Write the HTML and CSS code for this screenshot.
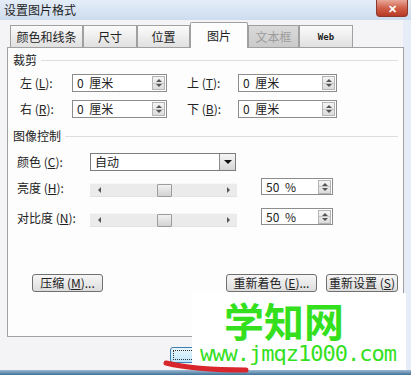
FILE: index.html
```
<!DOCTYPE html>
<html lang="zh-CN">
<head>
    <meta charset="UTF-8">
    <title>设置图片格式</title>
    <link rel="stylesheet" href="styles.css">
</head>
<body>
    <div class="dialog">
        <div class="titlebar">
            <span class="title">设置图片格式</span>
            <span class="close">✕</span>
        </div>

        <div class="tabs">
            <div class="tab tab-line">颜色和线条</div>
            <div class="tab tab-size">尺寸</div>
            <div class="tab tab-pos">位置</div>
            <div class="tab tab-pic active">图片</div>
            <div class="tab tab-box disabled">文本框</div>
            <div class="tab tab-web">Web</div>
        </div>

        <div class="panel">
            <div class="group-title">裁剪</div>
            <div class="crop">
                <span class="label">左 (<u>L</u>):</span>
                <div class="field"><span class="val">0 厘米</span><span class="spin"></span></div>
                <span class="label right">上 (<u>T</u>):</span>
                <div class="field"><span class="val">0 厘米</span><span class="spin"></span></div>

                <span class="label">右 (<u>R</u>):</span>
                <div class="field"><span class="val">0 厘米</span><span class="spin"></span></div>
                <span class="label right">下 (<u>B</u>):</span>
                <div class="field"><span class="val">0 厘米</span><span class="spin"></span></div>
            </div>

            <div class="group-title second">图像控制</div>
            <div class="control color-row">
                <span class="label">颜色 (<u>C</u>):</span>
                <div class="select"><span>自动</span><span class="drop"></span></div>
            </div>
            <div class="control slider-row">
                <span class="label">亮度 (<u>H</u>):</span>
                <div class="slider"><span class="arrow-l"></span><span class="thumb"></span><span class="arrow-r"></span></div>
                <div class="field pct"><span class="val">50 %</span><span class="spin"></span></div>
            </div>
            <div class="control slider-row last">
                <span class="label">对比度 (<u>N</u>):</span>
                <div class="slider"><span class="arrow-l"></span><span class="thumb"></span><span class="arrow-r"></span></div>
                <div class="field pct"><span class="val">50 %</span><span class="spin"></span></div>
            </div>

            <div class="buttons">
                <button class="btn btn-compress">压缩 (<u>M</u>)...</button>
                <button class="btn btn-recolor">重新着色 (<u>E</u>)...</button>
                <button class="btn btn-reset">重新设置 (<u>S</u>)</button>
            </div>
        </div>

        <div class="footer">
            <button class="ok"><span></span></button>
        </div>
        <div class="frame-bottom"></div>

        <!-- watermark pasted over the screenshot -->
        <div class="watermark">
            <div class="wm-name">学知网</div>
            <div class="wm-url">www.jmqz1000.com</div>
        </div>
        <svg class="scribble" width="90" height="16" viewBox="0 0 90 16">
            <path d="M4 4 C 20 8, 40 11, 84 11" stroke="#d8262c" stroke-width="5" fill="none" stroke-linecap="round"/>
        </svg>
    </div>
</body>
</html>
```

FILE: styles.css
```
* {
    box-sizing: border-box;
}
body {
    margin: 0;
    font: 12px/1 "Noto Sans CJK SC", sans-serif;
    color: #222;
}
u {
    text-decoration: underline;
}
.dialog {
    position: relative;
    width: 411px;
    height: 375px;
    overflow: hidden;
    background: linear-gradient(to right, #f4f3f6 403px, #e7edf6 403px);
}
.titlebar {
    height: 20px;
    display: flex;
    align-items: center;
    padding-left: 4px;
    background: linear-gradient(#e4edf8, #cddcee);
}
.title {
    color: #1e1e1e;
}
.close {
    margin-left: auto;
    margin-right: 3px;
    align-self: flex-start;
    width: 32px;
    height: 17px;
    border: 1px solid #8c3a2e;
    border-top: none;
    border-radius: 0 0 4px 4px;
    background: linear-gradient(#e8a898, #d0604a 50%, #b83a26);
    display: flex;
    align-items: center;
    justify-content: center;
    color: #fff;
    font-weight: bold;
    font-size: 11px;
}

/* tabs */
.tabs {
    display: flex;
    align-items: flex-end;
    height: 27px;
    padding-left: 10px;
}
.tab {
    height: 22px;
    border: 1px solid #a0a0a0;
    border-bottom: none;
    background: linear-gradient(#fbfbfb, #e0e0e0);
    display: flex;
    align-items: center;
    justify-content: center;
}
.tab.active {
    height: 26px;
    margin-bottom: -1px;
    position: relative;
    z-index: 1;
    background: #fdfdfd;
    border-radius: 2px 2px 0 0;
}
.tab.disabled {
    background: linear-gradient(#dadada, #cacaca);
    color: #9c9c9c;
}
.tab-line { width: 73px; }
.tab-size { width: 54px; }
.tab-pos { width: 53px; }
.tab-pic { width: 58px; }
.tab-box { width: 51px; }
.tab-web {
    width: 54px;
    font: bold 9px "DejaVu Sans Mono", monospace;
}

/* panel */
.panel {
    margin-left: 7px;
    width: 397px;
    height: 290px;
    border: 1px solid #a0a0a0;
    background: #fdfdfd;
    padding: 5px 5px 0 5px;
    display: flex;
    flex-direction: column;
}
.group-title {
    display: flex;
    align-items: center;
    gap: 4px;
    height: 14px;
}
.group-title::after {
    content: "";
    flex: 1;
    border-top: 1px solid #dedede;
}
.group-title.second {
    margin-top: 11px;
}
.crop {
    margin-top: 7px;
    padding-left: 7px;
    display: grid;
    grid-template-columns: 52px 95px 71px 99px;
    grid-auto-rows: 18px;
    row-gap: 8px;
    align-items: center;
}
.label {
    white-space: nowrap;
}
.label.right {
    padding-left: 20px;
}
.field {
    height: 18px;
    border: 1px solid #8c8c8c;
    background: #fff;
    display: flex;
    align-items: center;
    padding-left: 4px;
    word-spacing: 3px;
}
.field .val {
    flex: 1;
}
.spin {
    width: 13px;
    height: 14px;
    margin-right: 1px;
    border: 1px solid #b4b4b4;
    background:
        linear-gradient(#c4c4c4, #c4c4c4) center / 100% 1px no-repeat,
        linear-gradient(#f4f4f4, #dcdcdc);
    position: relative;
}
.spin::before,
.spin::after {
    content: "";
    position: absolute;
    left: 3px;
    border-left: 3px solid transparent;
    border-right: 3px solid transparent;
}
.spin::before {
    top: 2px;
    border-bottom: 3px solid #555;
}
.spin::after {
    bottom: 2px;
    border-top: 3px solid #555;
}

/* image control */
.control {
    display: flex;
    align-items: center;
    padding-left: 4px;
}
.control .label {
    width: 73px;
}
.color-row {
    margin-top: 10px;
    height: 18px;
}
.select {
    width: 146px;
    height: 18px;
    border: 1px solid #7c7c7c;
    background: #fff;
    display: flex;
    align-items: center;
    padding-left: 4px;
}
.drop {
    margin-left: auto;
    width: 16px;
    height: 16px;
    border-left: 1px solid #8a8a8a;
    background: linear-gradient(#f6f6f6, #d6d6d6);
    display: flex;
    align-items: center;
    justify-content: center;
}
.drop::after {
    content: "";
    border-left: 4px solid transparent;
    border-right: 4px solid transparent;
    border-top: 4px solid #111;
}
.slider-row {
    margin-top: 7px;
    height: 19px;
}
.slider-row.last {
    margin-top: 11px;
}
.slider {
    width: 147px;
    height: 14px;
    align-self: flex-end;
    background: #ebebeb;
    border-top: 1px solid #f7f7f7;
    border-bottom: 1px solid #e2e2e2;
    display: flex;
    align-items: center;
}
.arrow-l {
    margin-left: 8px;
    border-right: 3px solid #555;
    border-top: 3px solid transparent;
    border-bottom: 3px solid transparent;
}
.thumb {
    margin-left: 56px;
    width: 15px;
    height: 13px;
    border: 1px solid #9c9c9c;
    border-radius: 1px;
    background: linear-gradient(#f2f2f2, #d2d2d2);
}
.arrow-r {
    margin-left: auto;
    margin-right: 7px;
    border-left: 3px solid #555;
    border-top: 3px solid transparent;
    border-bottom: 3px solid transparent;
}
.field.pct {
    margin-left: 24px;
    width: 72px;
    height: 17px;
    align-self: flex-start;
}

/* buttons */
.buttons {
    margin-top: 47px;
    display: flex;
    gap: 9px;
    padding-left: 19px;
}
.btn {
    height: 18px;
    padding: 0;
    border: 1px solid #707070;
    border-radius: 3px;
    background: linear-gradient(#f6f6f6, #dddddd);
    font: 12px/1 "Noto Sans CJK SC", sans-serif;
    color: #222;
    white-space: nowrap;
}
.btn-compress { width: 71px; }
.btn-recolor { width: 91px; margin-left: auto; }
.btn-reset { width: 72px; }

.footer {
    height: 33px;
    padding: 10px 0 0 170px;
}
.ok {
    width: 75px;
    height: 16px;
    padding: 2px;
    border: 1px solid #3c7fb1;
    border-radius: 3px;
    background: linear-gradient(#eaf6fd, #bee6fd);
}
.ok span {
    display: block;
    height: 100%;
    border: 1px dotted #333;
}
.frame-bottom {
    height: 5px;
    background: linear-gradient(#9fbad3, #3f7296);
}

/* overlays */
.watermark {
    position: absolute;
    left: 192px;
    top: 293px;
    width: 214px;
    height: 77px;
    background: #fff;
    color: #34e01e;
}
.wm-name {
    margin: 7px 0 0 32px;
    font: bold 40px/40px "Noto Sans CJK SC", sans-serif;
}
.wm-url {
    margin: 3px 0 0 8px;
    font: 22px/22px "DejaVu Sans Mono", monospace;
    letter-spacing: -1px;
}
.scribble {
    position: absolute;
    left: 162px;
    top: 359px;
}
```
